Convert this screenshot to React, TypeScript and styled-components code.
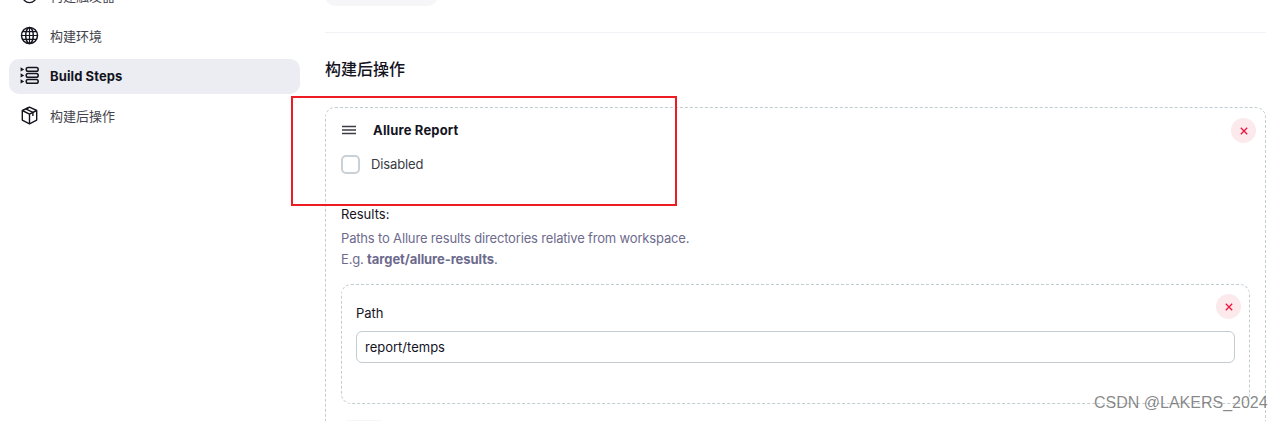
import React from 'react';
import styled, { createGlobalStyle } from 'styled-components';
import { IoTimeOutline } from 'react-icons/io5';

const Global = createGlobalStyle`
  html, body {
    margin: 0;
    padding: 0;
    background: #fff;
    overflow: hidden;
  }
  body {
    font-family: Inter, "Noto Sans CJK SC", sans-serif;
    font-size: 13px;
    color: #14141f;
  }
`;

const Page = styled.div`
  position: relative;
  width: 1283px;
  height: 421px;
  overflow: hidden;
  display: flex;
`;

const Sidebar = styled.nav`
  flex: none;
  width: 291px;
  margin: -21px 0 0 9px;
  display: flex;
  flex-direction: column;
  gap: 5px;
`;

const NavItem = styled.div<{ $active?: boolean }>`
  height: 35px;
  box-sizing: border-box;
  padding: 0 0 2px 11px;
  border-radius: 10px;
  display: flex;
  align-items: center;
  gap: 11px;
  background: ${(p) => (p.$active ? '#ecedf2' : 'transparent')};
  font-weight: ${(p) => (p.$active ? 700 : 400)};
  letter-spacing: ${(p) => (p.$active ? '0.1px' : '0')};
  color: ${(p) => (p.$active ? '#14141f' : '#44444e')};
  svg {
    flex: none;
    width: 19px;
    height: 19px;
    color: #14141f;
  }
`;

const Main = styled.main`
  flex: none;
  width: 941px;
  margin-left: 25px;
  margin-top: -30px;
`;

const TopButton = styled.div`
  width: 113px;
  height: 36px;
  border-radius: 10px;
  background: #f6f6f8;
`;

const Divider = styled.div`
  height: 1px;
  background: #f1f2f5;
  margin-top: 26px;
`;

const Heading = styled.h2`
  margin: 25px 0 0;
  font-size: 16px;
  line-height: 22px;
  font-weight: 500;
  color: #14141f;
`;

const Card = styled.section`
  position: relative;
  margin-top: 27px;
  height: 340px;
  box-sizing: border-box;
  padding: 13px 15px 0;
  border: 1px dashed #c3ccd1;
  border-radius: 10px;
`;

const CardHead = styled.div`
  display: flex;
  align-items: center;
  gap: 16px;
  height: 18px;
  font-weight: 700;
  letter-spacing: 0.17px;
  svg {
    flex: none;
    width: 16px;
    height: 16px;
  }
`;

const CheckRow = styled.label`
  display: flex;
  align-items: center;
  gap: 11px;
  margin-top: 15px;
  height: 20px;
  letter-spacing: -0.12px;
  color: #3a3a44;
`;

const CheckBox = styled.span`
  width: 15px;
  height: 15px;
  border: 2px solid #c9d1d6;
  border-radius: 5px;
`;

const FieldLabel = styled.div`
  margin-top: 31px;
  line-height: 18px;
  color: #14141f;
`;

const Hint = styled.div`
  margin-top: 5px;
  line-height: 21px;
  letter-spacing: -0.17px;
  color: #6d6b8d;
  b {
    font-weight: 700;
    letter-spacing: -0.07px;
  }
`;

const InnerCard = styled.div`
  position: relative;
  margin-top: 14px;
  width: 909px;
  height: 120px;
  box-sizing: border-box;
  padding: 19px 14px 0;
  border: 1px dashed #c3ccd1;
  border-radius: 10px;
`;

const PathLabel = styled.div`
  line-height: 18px;
  color: #14141f;
`;

const PathInput = styled.input`
  display: block;
  box-sizing: border-box;
  width: 879px;
  height: 32px;
  margin-top: 9px;
  padding: 0 8px;
  border: 1px solid #c3ccd1;
  border-radius: 6px;
  font: inherit;
  color: #14141f;
  outline: none;
`;

const RemoveButton = styled.span<{ $top: number; $right: number }>`
  position: absolute;
  top: ${(p) => p.$top}px;
  right: ${(p) => p.$right}px;
  width: 25px;
  height: 25px;
  border-radius: 50%;
  background: #fbe9ec;
  display: flex;
  align-items: center;
  justify-content: center;
  svg {
    width: 8px;
    height: 8px;
  }
`;

const AddButton = styled.div`
  width: 46px;
  height: 20px;
  margin-top: 16px;
  border-radius: 8px;
  background: #f6f6f8;
`;

const Highlight = styled.div`
  position: absolute;
  left: 291px;
  top: 96px;
  width: 382px;
  height: 106px;
  border: 2px solid #ed1c24;
`;

const Watermark = styled.div`
  position: absolute;
  left: 1094px;
  top: 393px;
  font-family: "Liberation Sans", sans-serif;
  font-size: 16px;
  line-height: 20px;
  color: rgba(90, 90, 90, 0.72);
  white-space: nowrap;
`;

const CloseGlyph = () => (
  <svg viewBox="0 0 10 10" fill="none" stroke="#f0123c" strokeWidth="1.6">
    <path d="M1 1l8 8M9 1l-8 8" />
  </svg>
);

const DragGlyph = () => (
  <svg viewBox="0 0 16 16" fill="none" stroke="#3c3c46" strokeWidth="1.3">
    <path d="M1 4.5h14M1 8h14M1 11.5h14" />
  </svg>
);

const GlobeGlyph = () => (
  <svg viewBox="0 0 19 19" fill="none" stroke="#14141f" strokeWidth="1.5">
    <circle cx="9.5" cy="9.5" r="8" />
    <ellipse cx="9.5" cy="9.5" rx="3.8" ry="8" />
    <path d="M9.5 1.5v16M2.6 5.6h13.8M2.6 13.4h13.8M1.5 9.5h16" strokeWidth="1.2" />
  </svg>
);

const StepsGlyph = () => (
  <svg viewBox="0 0 19 19" fill="none" stroke="#14141f" strokeWidth="1.5">
    <rect x="6.2" y="1.6" width="12" height="3.6" rx="1.8" />
    <rect x="6.2" y="7.6" width="12" height="3.6" rx="1.8" />
    <rect x="6.2" y="13.6" width="12" height="3.6" rx="1.8" />
    <path fill="#14141f" stroke="none" d="M.6 1.2l3.6 2.2-3.6 2.2zM.6 7.2l3.6 2.2-3.6 2.2zM.6 13.2l3.6 2.2-3.6 2.2z" />
  </svg>
);

const PackageGlyph = () => (
  <svg viewBox="0 0 19 19" fill="none" stroke="#14141f" strokeWidth="1.4" strokeLinejoin="round">
    <path d="M9.5 1.2l7.2 3.3v9.6l-7.2 3.7-7.2-3.7V4.5z" />
    <path d="M2.3 4.5l7.2 3.6 7.2-3.6M9.5 8.1v9.7" />
    <path d="M5.7 2.9l7.2 3.5v3.5M9.3 1.3l-3.6 1.6" />
  </svg>
);

const App: React.FC = () => {
  return (
    <Page>
      <Global />
      <Sidebar>
        <NavItem><IoTimeOutline />构建触发器</NavItem>
        <NavItem><GlobeGlyph />构建环境</NavItem>
        <NavItem $active><StepsGlyph />Build Steps</NavItem>
        <NavItem><PackageGlyph />构建后操作</NavItem>
      </Sidebar>

      <Main>
        <TopButton />
        <Divider />
        <Heading>构建后操作</Heading>
        <Card>
          <RemoveButton $top={10} $right={9}><CloseGlyph /></RemoveButton>
          <CardHead><DragGlyph />Allure Report</CardHead>
          <CheckRow><CheckBox />Disabled</CheckRow>
          <FieldLabel>Results:</FieldLabel>
          <Hint>
            Paths to Allure results directories relative from workspace.
            <br />
            E.g. <b>target/allure-results</b>.
          </Hint>
          <InnerCard>
            <RemoveButton $top={9} $right={8}><CloseGlyph /></RemoveButton>
            <PathLabel>Path</PathLabel>
            <PathInput readOnly value="report/temps" />
          </InnerCard>
          <AddButton />
        </Card>
      </Main>

      <Highlight />
      <Watermark>CSDN @LAKERS_2024</Watermark>
    </Page>
  );
};

export default App;
